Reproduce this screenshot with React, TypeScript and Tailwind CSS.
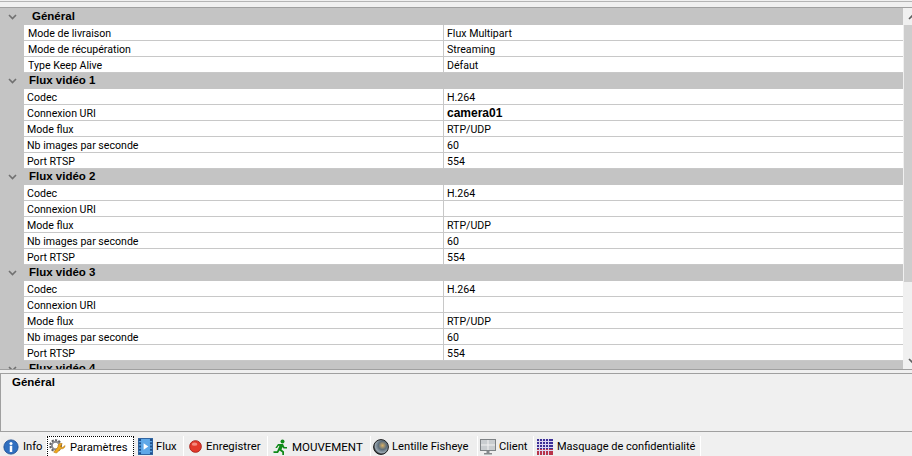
const FONT = "font-['Roboto','Liberation_Sans',Arial,sans-serif]"
const BOLD = "font-['Liberation_Sans',Arial,sans-serif] font-bold"

type Row = { name: string; value: string; bold?: boolean }

const videoRows = (uri: string): Row[] => [
  { name: 'Codec', value: 'H.264' },
  { name: 'Connexion URI', value: uri, bold: true },
  { name: 'Mode flux', value: 'RTP/UDP' },
  { name: 'Nb images par seconde', value: '60' },
  { name: 'Port RTSP', value: '554' },
]

const SECTIONS: { title: string; indent?: boolean; rows: Row[] }[] = [
  {
    title: 'Général',
    indent: true,
    rows: [
      { name: 'Mode de livraison', value: 'Flux Multipart' },
      { name: 'Mode de récupération', value: 'Streaming' },
      { name: 'Type Keep Alive', value: 'Défaut' },
    ],
  },
  { title: 'Flux vidéo 1', rows: videoRows('camera01') },
  { title: 'Flux vidéo 2', rows: videoRows('') },
  { title: 'Flux vidéo 3', rows: videoRows('') },
  { title: 'Flux vidéo 4', rows: [] },
]

function Chevron({ up, color = '#707070' }: { up?: boolean; color?: string }) {
  return (
    <svg width="9" height="6" viewBox="0 0 9 6" fill="none" stroke={color} strokeWidth="1.6" className="shrink-0">
      <path d={up ? 'M1 5l3.5-3.5L8 5' : 'M1 1l3.5 3.5L8 1'} />
    </svg>
  )
}

function Section({ title, indent, rows }: { title: string; indent?: boolean; rows: Row[] }) {
  return (
    <div>
      <div className="h-4 flex items-center bg-[#c4c4c4]">
        <div className="w-6 pl-2 shrink-0 flex items-center">
          <Chevron />
        </div>
        <span className={`${indent ? 'pl-2' : 'pl-[5px]'} ${BOLD} text-[11.5px] text-black`}>{title}</span>
      </div>
      {rows.map((row) => (
        <div key={row.name} className="h-4 flex bg-[#c4c4c4]">
          <div className="w-6 shrink-0" />
          <div className={`w-[419px] bg-white border-b border-[#c8c8c8] pt-px ${indent ? 'pl-1' : 'pl-[3px]'} text-[10.6px] leading-[16px] text-black truncate`}>
            {row.name}
          </div>
          <div className={`flex-1 bg-white border-b border-l border-[#c8c8c8] pl-[3px] leading-[16px] text-black ${row.bold ? `${BOLD} text-[12px]` : 'pt-px text-[10.6px]'}`}>
            {row.value}
          </div>
        </div>
      ))}
    </div>
  )
}

function InfoIcon() {
  return (
    <svg width="16" height="16" viewBox="0 0 18 18">
      <circle cx="9" cy="9" r="8" fill="#2f6fc0" stroke="#1d4f95" />
      <circle cx="9" cy="5" r="1.7" fill="#fff" />
      <rect x="7.6" y="7.6" width="2.8" height="7" fill="#fff" />
    </svg>
  )
}

function GearIcon() {
  return (
    <svg width="17" height="17" viewBox="0 0 18 18">
      <circle cx="7" cy="8" r="5" fill="none" stroke="#5f5f64" strokeWidth="3.500" strokeDasharray="2 1.200" />
      <circle cx="7" cy="8" r="4" fill="none" stroke="#8c8c92" strokeWidth="2" />
      <path d="M17 8c0 2.500-2.500 4-4.500 3.300L8 16l-3-1 4.500-5.500C9 7 11.500 5 14 6l-2 3 2.500 1z" fill="#f0a81c" stroke="#b87408" strokeWidth=".6" />
    </svg>
  )
}

function FilmIcon() {
  return (
    <svg width="15" height="17" viewBox="0 0 16 18">
      <rect x="0.500" y="0.500" width="15" height="17" fill="#5fa8e8" stroke="#2a5f9e" />
      <path d="M2 1v16M14 1v16" stroke="#1f4f8a" strokeWidth="2.500" strokeDasharray="2 1.500" />
      <path d="M6 5.500l5 3.500-5 3.500z" fill="#fff" />
    </svg>
  )
}

function RecordIcon() {
  return (
    <svg width="13" height="13" viewBox="0 0 14 14">
      <circle cx="7" cy="7" r="6.300" fill="#e3392b" stroke="#a8221a" />
      <ellipse cx="6" cy="4.500" rx="3" ry="1.800" fill="#f58b7f" />
    </svg>
  )
}

function RunnerIcon() {
  return (
    <svg width="16" height="16" viewBox="0 0 16 16" fill="#0f8a18">
      <circle cx="10.500" cy="2.500" r="2" />
      <path d="M6 5h5l1.500 3H15v1.500h-3.500L10.500 8 9.500 10.500l2.500 2V16H10.300v-2.500L7.500 11.500 6 14H1.500v-1.700H5l2.500-5.600H6.500L5 9H3.300z" />
    </svg>
  )
}

function LensIcon() {
  return (
    <svg width="16" height="16" viewBox="0 0 16 16">
      <defs>
        <radialGradient id="lens" cx="60%" cy="40%" r="62%">
          <stop offset="0%" stopColor="#d8b066" />
          <stop offset="45%" stopColor="#5f6f7c" />
          <stop offset="80%" stopColor="#9aa7b0" />
          <stop offset="100%" stopColor="#1c2024" />
        </radialGradient>
      </defs>
      <circle cx="8" cy="8" r="7.400" fill="url(#lens)" stroke="#1c1c1c" />
    </svg>
  )
}

function MonitorIcon() {
  return (
    <svg width="16" height="16" viewBox="0 0 16 16">
      <rect x="0.500" y="0.500" width="15" height="11" fill="#c9cdd0" stroke="#7e8285" />
      <path d="M8 1v10M1 6h14" stroke="#f2f2f2" />
      <rect x="6.500" y="12" width="3" height="2" fill="#85898c" />
      <rect x="4" y="14" width="8" height="1.500" fill="#85898c" />
    </svg>
  )
}

function MaskIcon() {
  return (
    <svg width="16" height="16" viewBox="0 0 16 16">
      <rect width="16" height="16" fill="#3b2f96" />
      <path d="M0 10h16v6H0z" fill="#b8344a" />
      <path d="M2.500 0v16M5.500 0v16M8.500 0v16M11.500 0v16M0 2.500h16M0 5.500h16M0 8.500h16M0 11.500h16" stroke="#ddd6f0" />
    </svg>
  )
}

const TABS = [
  { label: 'Info', icon: <InfoIcon />, cls: 'w-[46px] pl-[2px] gap-[4px] text-[11.2px]' },
  { label: 'Paramètres', icon: <GearIcon />, cls: 'w-[87px] pl-[1px] gap-[4px] text-[11.2px]' },
  { label: 'Flux', icon: <FilmIcon />, cls: 'w-[50px] pl-[4px] gap-[3px] text-[11.2px]' },
  { label: 'Enregistrer', icon: <RecordIcon />, cls: 'w-[84px] pl-[5px] gap-[4px] text-[11.3px]' },
  { label: 'MOUVEMENT', icon: <RunnerIcon />, cls: 'w-[103px] pl-[4px] gap-[4px] text-[11.5px]' },
  { label: 'Lentille Fisheye', icon: <LensIcon />, cls: 'w-[107px] pl-[2px] gap-[3px] text-[11.2px]' },
  { label: 'Client', icon: <MonitorIcon />, cls: 'w-[56px] pl-[2px] gap-[3px] text-[11.2px]' },
  { label: 'Masquage de confidentialité', icon: <MaskIcon />, cls: 'w-[167px] pl-[3px] gap-[4px] text-[11px]' },
]

export default function App() {
  return (
    <div className={`${FONT} w-[912px] h-[456px] flex flex-col bg-[#f0f0f0] overflow-hidden`}>
      <div className="h-[2px] shrink-0 border-b border-[#b4b4b4]" />
      <div className="h-[6px] shrink-0 border-b border-[#a0a0a0]" />

      {/* property grid */}
      <div className="h-[362px] shrink-0 flex overflow-hidden border-b border-[#a0a0a0]">
        <div className="w-[903px] h-full shrink-0 overflow-hidden bg-[#c4c4c4] pt-px">
          {SECTIONS.map((s) => (
            <Section key={s.title} title={s.title} indent={s.indent} rows={s.rows} />
          ))}
        </div>
        <div className="w-2 ml-px flex flex-col overflow-hidden">
          <div className="h-[17px] shrink-0 pl-1 pt-[6px]">
            <Chevron up color="#606060" />
          </div>
          <div className="h-[257px] shrink-0 bg-[#cdcdcd]" />
          <div className="flex-1 flex flex-col justify-end pl-1 pb-[5px]">
            <Chevron color="#606060" />
          </div>
        </div>
      </div>

      <div className="h-[3px] shrink-0" />

      {/* description */}
      <div className="h-[59px] shrink-0 border-y border-[#a0a0a0] border-l pl-[11px] pt-px">
        <span className={`${BOLD} text-[11.5px] text-black leading-[14px] block`}>Général</span>
      </div>

      {/* tabs */}
      <div className="flex-1 flex items-stretch pl-px pt-[4px]">
        {TABS.map((t, i) => (
          <div
            key={t.label}
            className={`${t.cls} shrink-0 flex items-center text-black ${
              i === 1 ? 'bg-white border border-dotted border-black' : 'bg-[#eeeeee] border-r border-white'
            }`}
          >
            {t.icon}
            <span className={`whitespace-nowrap ${i === 1 ? 'pt-[3px]' : 'pt-px'}`}>{t.label}</span>
          </div>
        ))}
      </div>
    </div>
  )
}
